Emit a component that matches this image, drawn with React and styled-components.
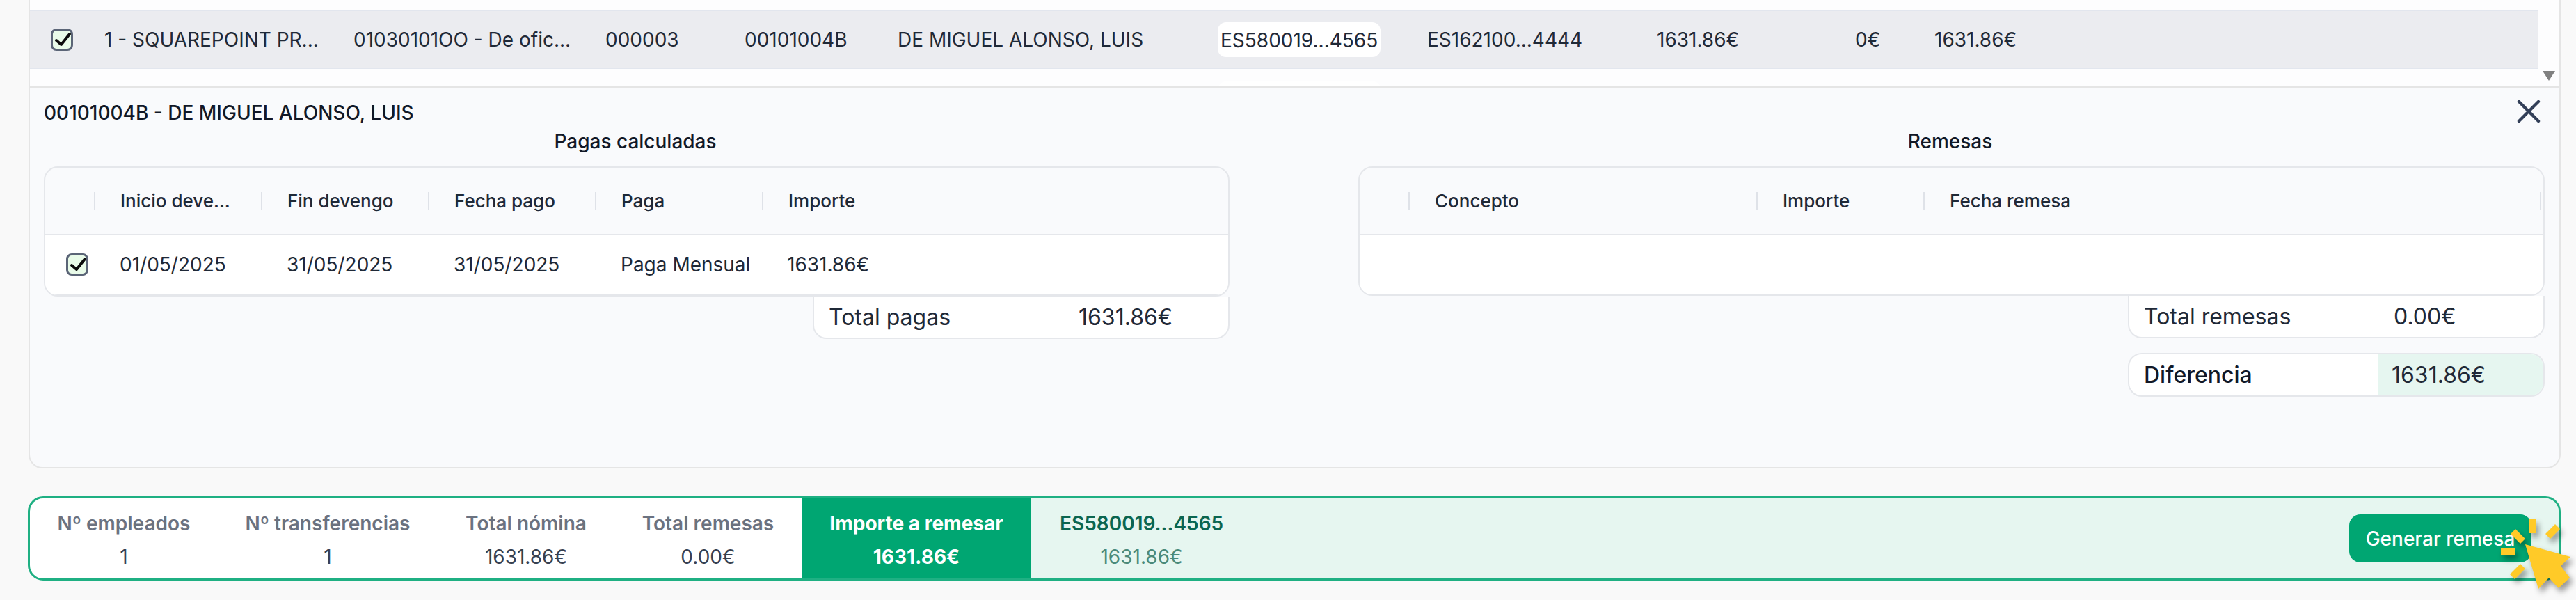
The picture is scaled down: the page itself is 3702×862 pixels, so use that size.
import React from 'react';
import styled, { createGlobalStyle } from 'styled-components';

const GlobalStyle = createGlobalStyle`
  html, body {
    margin: 0;
    background: #f9f9f9;
    font-family: 'Inter', 'Liberation Sans', sans-serif;
    color: #1f2937;
  }
`;

const Page = styled.div`
  box-sizing: border-box;
  width: 3702px;
  height: 862px;
  padding: 0 22px 0 40px;
  overflow: hidden;
`;

const ListPanel = styled.div`
  display: flex;
  box-sizing: border-box;
  height: 124px;
  padding-top: 14px;
  margin-left: 1px;
  background: #fdfdfe;
  border-left: 2px solid #e5e5e5;
  border-right: 2px solid #e5e5e5;
  overflow: hidden;
`;

const RowColumn = styled.div`
  width: 3605px;
  flex: none;
`;

const EmployeeRow = styled.div`
  display: grid;
  grid-template-columns: 107px 358px 362px 200px 220px 464px 297px 330px 285px 114px 1fr;
  align-items: center;
  box-sizing: border-box;
  height: 85px;
  background: #ebecf0;
  border-top: 2px solid #e2e6ee;
  border-bottom: 2px solid #e2e6ee;
  font-size: 28px;
  white-space: nowrap;
`;

const CheckCell = styled.div`
  padding-left: 30px;
  display: flex;
`;

const Pill = styled.span`
  justify-self: start;
  margin-left: -4px;
  padding: 0 4px;
  height: 50px;
  line-height: 52px;
  background: #fff;
  border-radius: 12px;
`;

const NextPill = styled.div`
  width: 235px;
  height: 30px;
  margin: 18px 0 0 1707px;
  background: #fff;
  border-radius: 12px;
`;

const ScrollArrow = styled.div`
  width: 0;
  height: 0;
  margin: 88px 0 0 6px;
  border-left: 9px solid transparent;
  border-right: 9px solid transparent;
  border-top: 14px solid #808080;
`;

const Box = styled.span`
  box-sizing: border-box;
  display: flex;
  width: 32px;
  height: 32px;
  background: #e9fbe9;
  border: 3px solid #5b6577;
  border-radius: 8px;
  svg {
    display: block;
    margin: -3px;
  }
`;

const DetailPanel = styled.div`
  box-sizing: border-box;
  height: 549px;
  margin-left: 1px;
  padding: 0 24px 0 20px;
  background: #f9fafc;
  border: 2px solid #e5e5e5;
  border-radius: 0 0 20px 20px;
`;

const DetailHead = styled.div`
  display: flex;
  justify-content: space-between;
  align-items: flex-start;
  height: 65px;
`;

const DetailTitle = styled.div`
  margin-top: 19px;
  font-size: 28px;
  font-weight: 500;
  line-height: 34px;
  color: #111827;
`;

const CloseIcon = styled.svg`
  width: 34px;
  height: 34px;
  margin: 17px 3px 0 0;
`;

const Columns = styled.div`
  display: grid;
  grid-template-columns: 1704px 1705px;
  column-gap: 185px;
`;

const Column = styled.div`
  display: flex;
  flex-direction: column;
`;

const SectionTitle = styled.div`
  height: 48px;
  font-size: 28px;
  font-weight: 500;
  line-height: 24px;
  text-align: center;
  color: #111827;
  padding-right: 4px;
`;

const Table = styled.div`
  box-sizing: border-box;
  background: #f9fafc;
  border: 2px solid #e5e7eb;
  border-radius: 20px;
  overflow: hidden;
`;

const HeadRow = styled.div`
  display: grid;
  grid-template-columns: ${(p) => p.$cols};
  align-items: center;
  box-sizing: border-box;
  height: 97px;
  padding-top: 1px;
  border-bottom: 2px solid #e5e7eb;
`;

const HeadCell = styled.div`
  height: 26px;
  line-height: 26px;
  padding-left: 36px;
  font-size: 26px;
  font-weight: 500;
  white-space: nowrap;
  color: #1f2937;
  border-left: 2px solid #dfe2e8;
`;

const BodyRow = styled.div`
  display: grid;
  grid-template-columns: ${(p) => p.$cols};
  align-items: center;
  box-sizing: border-box;
  height: ${(p) => p.$height}px;
  background: #fff;
  font-size: 28px;
  white-space: nowrap;
  border-bottom: ${(p) => (p.$line ? '2px solid #e5e7eb' : 'none')};
`;

const BodyCheck = styled.div`
  padding-left: 30px;
  display: flex;
`;

const TotalBox = styled.div`
  align-self: flex-end;
  display: grid;
  grid-template-columns: ${(p) => (p.$split ? '358px 1fr' : '380px 1fr')};
  align-items: center;
  box-sizing: border-box;
  width: 599px;
  height: ${(p) => p.$height}px;
  margin-top: ${(p) => p.$gap}px;
  background: #fff;
  border: 2px solid #e5e7eb;
  border-top: ${(p) => (p.$open ? 'none' : '2px solid #e5e7eb')};
  border-radius: ${(p) => (p.$open ? '0 0 20px 20px' : '20px')};
  overflow: hidden;
  font-size: 32px;
`;

const TotalLabel = styled.div`
  padding-left: 21px;
  font-weight: ${(p) => (p.$strong ? 500 : 400)};
  color: ${(p) => (p.$strong ? '#111827' : '#1f2937')};
`;

const TotalValue = styled.div`
  padding-left: ${(p) => p.$pad}px;
`;

const DiffValue = styled.div`
  align-self: stretch;
  display: flex;
  align-items: center;
  padding-left: 19px;
  background: #e6f6f0;
`;

const SummaryBar = styled.div`
  position: relative;
  display: flex;
  box-sizing: border-box;
  height: 121px;
  margin-top: 40px;
  background: #fff;
  border: 3px solid #1fb083;
  border-radius: 22px;
`;

const Stat = styled.div`
  display: flex;
  flex-direction: column;
  align-items: center;
  width: ${(p) => p.$width}px;
  flex: none;
  padding-top: 20px;
  box-sizing: border-box;
`;

const StatLabel = styled.div`
  height: 48px;
  font-size: 28px;
  line-height: 32px;
  font-weight: 600;
  color: #6b7280;
`;

const StatValue = styled.div`
  font-size: 28px;
  line-height: 32px;
  color: #374151;
`;

const HighlightStat = styled(Stat)`
  background: #00a672;
  ${StatLabel}, ${StatValue} {
    color: #fff;
    font-weight: 700;
  }
`;

const BankArea = styled.div`
  flex: 1;
  display: flex;
  align-items: flex-start;
  justify-content: space-between;
  padding-left: 41px;
  background: #e6f6f0;
  border-radius: 0 19px 19px 0;
`;

const BankStat = styled(Stat)`
  width: auto;
  ${StatLabel} {
    color: #0b6650;
  }
  ${StatValue} {
    color: #4b8a79;
  }
`;

const GenerateButton = styled.button`
  height: 69px;
  width: 262px;
  margin: 23px 39px 0 0;
  padding: 0;
  background: #00a672;
  border: none;
  border-radius: 16px;
  color: #fff;
  font-family: inherit;
  font-size: 28px;
  font-weight: 500;
`;

const ClickCursor = styled.svg`
  position: absolute;
  top: 24px;
  right: -23px;
  width: 110px;
  height: 110px;
  overflow: visible;
  filter: drop-shadow(4px 6px 4px rgba(0, 0, 0, 0.4));
`;

const Check = () => (
  <Box>
    <svg width="32" height="32" viewBox="0 0 32 32" fill="none">
      <path d="M8 17l7 6L27 8" stroke="#0b0b0b" strokeWidth="4" strokeLinecap="round" strokeLinejoin="round" />
    </svg>
  </Box>
);

const pagasCols = '70px 240px 240px 240px 240px 670px 1fr';
const remesasCols = '70px 500px 240px 886px 1fr';

const stats = [
  { label: 'Nº empleados', value: '1', width: 270 },
  { label: 'Nº transferencias', value: '1', width: 316 },
  { label: 'Total nómina', value: '1631.86€', width: 254 },
  { label: 'Total remesas', value: '0.00€', width: 269 },
];

export default function App() {
  return (
    <Page>
      <GlobalStyle />
      <ListPanel>
        <RowColumn>
          <EmployeeRow>
            <CheckCell><Check /></CheckCell>
            <span>1 - SQUAREPOINT PR...</span>
            <span>01030101OO - De ofic...</span>
            <span>000003</span>
            <span>00101004B</span>
            <span>DE MIGUEL ALONSO, LUIS</span>
            <Pill>ES580019...4565</Pill>
            <span>ES162100...4444</span>
            <span>1631.86€</span>
            <span>0€</span>
            <span>1631.86€</span>
          </EmployeeRow>
          <NextPill />
        </RowColumn>
        <ScrollArrow />
      </ListPanel>

      <DetailPanel>
        <DetailHead>
          <DetailTitle>00101004B - DE MIGUEL ALONSO, LUIS</DetailTitle>
          <CloseIcon viewBox="0 0 34 34" fill="none">
            <path d="M3 3l28 28M31 3L3 31" stroke="#333f58" strokeWidth="4.4" strokeLinecap="round" />
          </CloseIcon>
        </DetailHead>
        <Columns>
          <Column>
            <SectionTitle>Pagas calculadas</SectionTitle>
            <Table>
              <HeadRow $cols={pagasCols}>
                <span />
                <HeadCell>Inicio deve...</HeadCell>
                <HeadCell>Fin devengo</HeadCell>
                <HeadCell>Fecha pago</HeadCell>
                <HeadCell>Paga</HeadCell>
                <HeadCell>Importe</HeadCell>
                <HeadCell />
              </HeadRow>
              <BodyRow $cols="107px 240px 240px 240px 239px 1fr" $height={86} $line>
                <BodyCheck><Check /></BodyCheck>
                <span>01/05/2025</span>
                <span>31/05/2025</span>
                <span>31/05/2025</span>
                <span>Paga Mensual</span>
                <span>1631.86€</span>
              </BodyRow>
            </Table>
            <TotalBox $height={61} $gap={0} $open>
              <TotalLabel>Total pagas</TotalLabel>
              <TotalValue $pad={0}>1631.86€</TotalValue>
            </TotalBox>
          </Column>
          <Column>
            <SectionTitle>Remesas</SectionTitle>
            <Table>
              <HeadRow $cols={remesasCols}>
                <span />
                <HeadCell>Concepto</HeadCell>
                <HeadCell>Importe</HeadCell>
                <HeadCell>Fecha remesa</HeadCell>
                <HeadCell />
              </HeadRow>
              <BodyRow $cols="1fr" $height={85} />
            </Table>
            <TotalBox $height={61} $gap={0} $open>
              <TotalLabel>Total remesas</TotalLabel>
              <TotalValue $pad={0}>0.00€</TotalValue>
            </TotalBox>
            <TotalBox $height={63} $gap={21} $split>
              <TotalLabel $strong>Diferencia</TotalLabel>
              <DiffValue>1631.86€</DiffValue>
            </TotalBox>
          </Column>
        </Columns>
      </DetailPanel>

      <SummaryBar>
        {stats.map((s) => (
          <Stat key={s.label} $width={s.width}>
            <StatLabel>{s.label}</StatLabel>
            <StatValue>{s.value}</StatValue>
          </Stat>
        ))}
        <HighlightStat $width={330}>
          <StatLabel>Importe a remesar</StatLabel>
          <StatValue>1631.86€</StatValue>
        </HighlightStat>
        <BankArea>
          <BankStat>
            <StatLabel>ES580019...4565</StatLabel>
            <StatValue>1631.86€</StatValue>
          </BankStat>
          <GenerateButton>Generar remesa</GenerateButton>
        </BankArea>
        <ClickCursor viewBox="0 0 110 110">
          <g fill="#ffca28">
            <path d="M39 42l65 18-14 13 13 17-16 15-14-15-15 16z" />
            <path d="M44 6h10v20H44z" />
            <path d="M18 27l7-7 14 14-7 7zM75 34l-7-7 14-14 7 7zM4 47h20v10H4zM32 70l7 7-15 15-7-7z" />
          </g>
        </ClickCursor>
      </SummaryBar>
    </Page>
  );
}
